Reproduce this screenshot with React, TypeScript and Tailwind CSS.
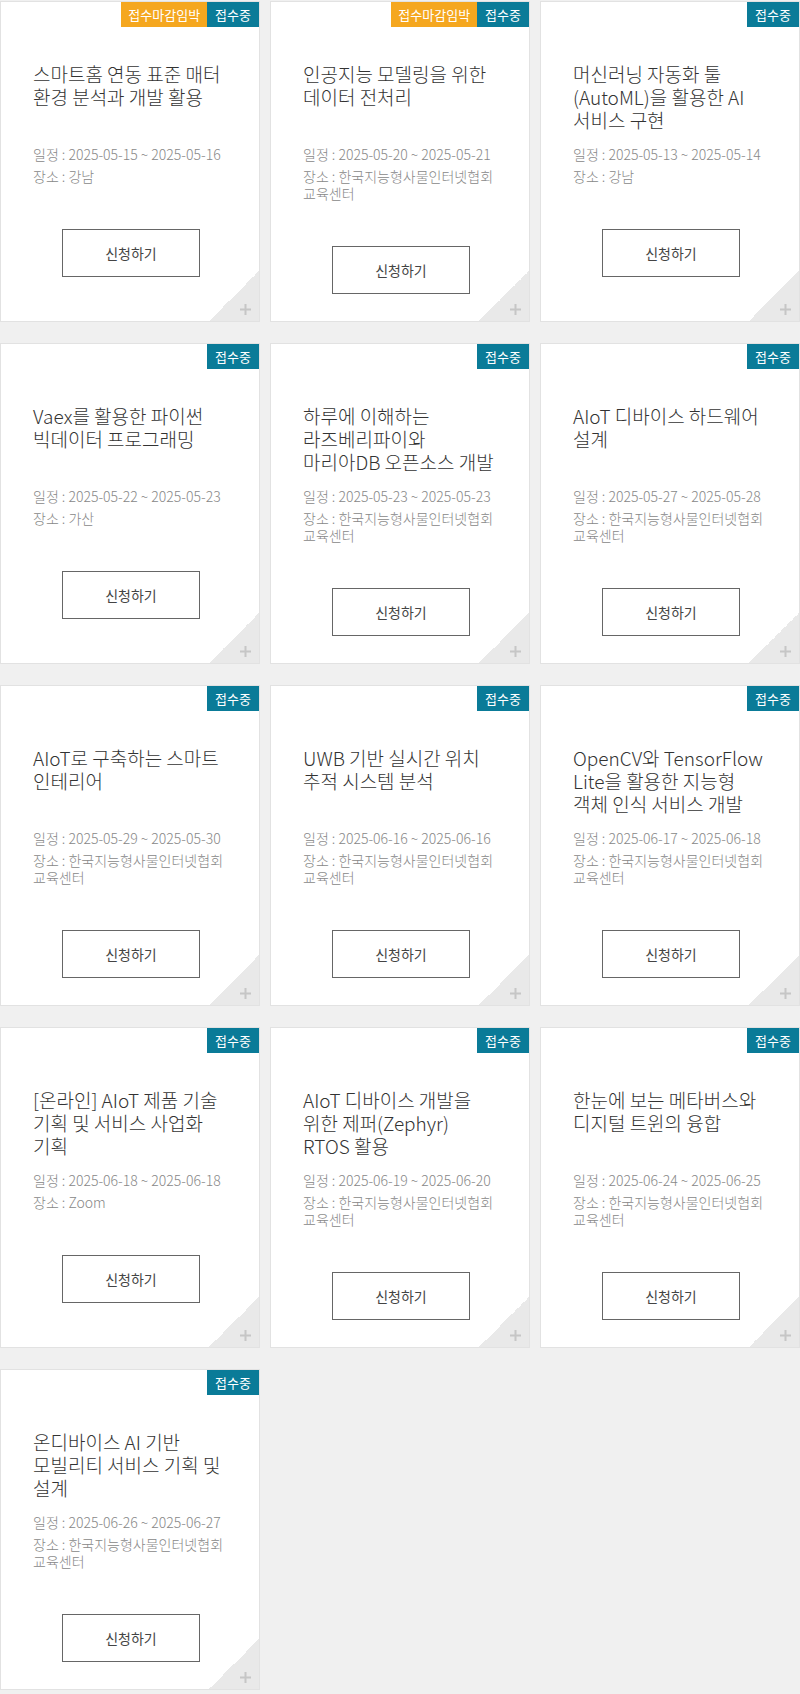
type Course = {
  title: string[];
  date: string;
  place: string;
  closing?: boolean;
};

const KICC = "한국지능형사물인터넷협회 교육센터";

const courses: Course[] = [
  { title: ["스마트홈 연동 표준 매터", "환경 분석과 개발 활용"], date: "2025-05-15 ~ 2025-05-16", place: "강남", closing: true },
  { title: ["인공지능 모델링을 위한", "데이터 전처리"], date: "2025-05-20 ~ 2025-05-21", place: KICC, closing: true },
  { title: ["머신러닝 자동화 툴", "(AutoML)을 활용한 AI", "서비스 구현"], date: "2025-05-13 ~ 2025-05-14", place: "강남" },
  { title: ["Vaex를 활용한 파이썬", "빅데이터 프로그래밍"], date: "2025-05-22 ~ 2025-05-23", place: "가산" },
  { title: ["하루에 이해하는", "라즈베리파이와", "마리아DB 오픈소스 개발"], date: "2025-05-23 ~ 2025-05-23", place: KICC },
  { title: ["AIoT 디바이스 하드웨어", "설계"], date: "2025-05-27 ~ 2025-05-28", place: KICC },
  { title: ["AIoT로 구축하는 스마트", "인테리어"], date: "2025-05-29 ~ 2025-05-30", place: KICC },
  { title: ["UWB 기반 실시간 위치", "추적 시스템 분석"], date: "2025-06-16 ~ 2025-06-16", place: KICC },
  { title: ["OpenCV와 TensorFlow", "Lite을 활용한 지능형", "객체 인식 서비스 개발"], date: "2025-06-17 ~ 2025-06-18", place: KICC },
  { title: ["[온라인] AIoT 제품 기술", "기획 및 서비스 사업화", "기획"], date: "2025-06-18 ~ 2025-06-18", place: "Zoom" },
  { title: ["AIoT 디바이스 개발을", "위한 제퍼(Zephyr)", "RTOS 활용"], date: "2025-06-19 ~ 2025-06-20", place: KICC },
  { title: ["한눈에 보는 메타버스와", "디지털 트윈의 융합"], date: "2025-06-24 ~ 2025-06-25", place: KICC },
  { title: ["온디바이스 AI 기반", "모빌리티 서비스 기획 및", "설계"], date: "2025-06-26 ~ 2025-06-27", place: KICC },
];

const CourseCard = ({ course }: { course: Course }) => {
  return (
    <div className="relative h-[321px] overflow-hidden border border-[#e2e2e2] bg-white pt-[60px] pl-[32px] pr-[28px]">
      <div className="absolute top-0 right-0 flex text-[13px] leading-[25px] text-white">
        {course.closing && <span className="h-[25px] bg-[#f5a71f] px-[7px]">접수마감임박</span>}
        <span className="h-[25px] bg-[#0a7b98] px-[8px]">접수중</span>
      </div>

      <h3 className="h-[69px] whitespace-nowrap text-[19px] font-light leading-[23px] text-[#333]">
        {course.title.map((line, i) => (
          <span key={i} className="block">
            {line}
          </span>
        ))}
      </h3>

      <div className="mt-[15px] text-[14px] font-light leading-[17px] text-[#888]">
        <p>일정 : {course.date}</p>
        <p className="mt-[5px]">장소 : {course.place}</p>
      </div>

      <button className="mt-[44px] ml-[29px] block h-[48px] w-[138px] border border-[#666] bg-white text-[14px] text-[#444]">
        신청하기
      </button>

      <div className="absolute right-0 bottom-0 h-[50px] w-[50px] bg-[linear-gradient(to_top_left,#e9e9e9_50%,transparent_50%)]" />
      <svg className="absolute right-[8px] bottom-[6px] h-[11px] w-[11px]" viewBox="0 0 11 11">
        <path d="M0 5.5h11M5.5 0v11" stroke="#c6c6c6" strokeWidth="2" />
      </svg>
    </div>
  );
};

export default function App() {
  return (
    <div className="min-h-[1694px] bg-[#f0f0f0] pt-px font-['Noto_Sans_CJK_KR','Noto_Sans',sans-serif]">
      <div className="grid grid-cols-3 gap-x-[10px] gap-y-[21px]">
        {courses.map((course, i) => (
          <CourseCard key={i} course={course} />
        ))}
      </div>
    </div>
  );
}
